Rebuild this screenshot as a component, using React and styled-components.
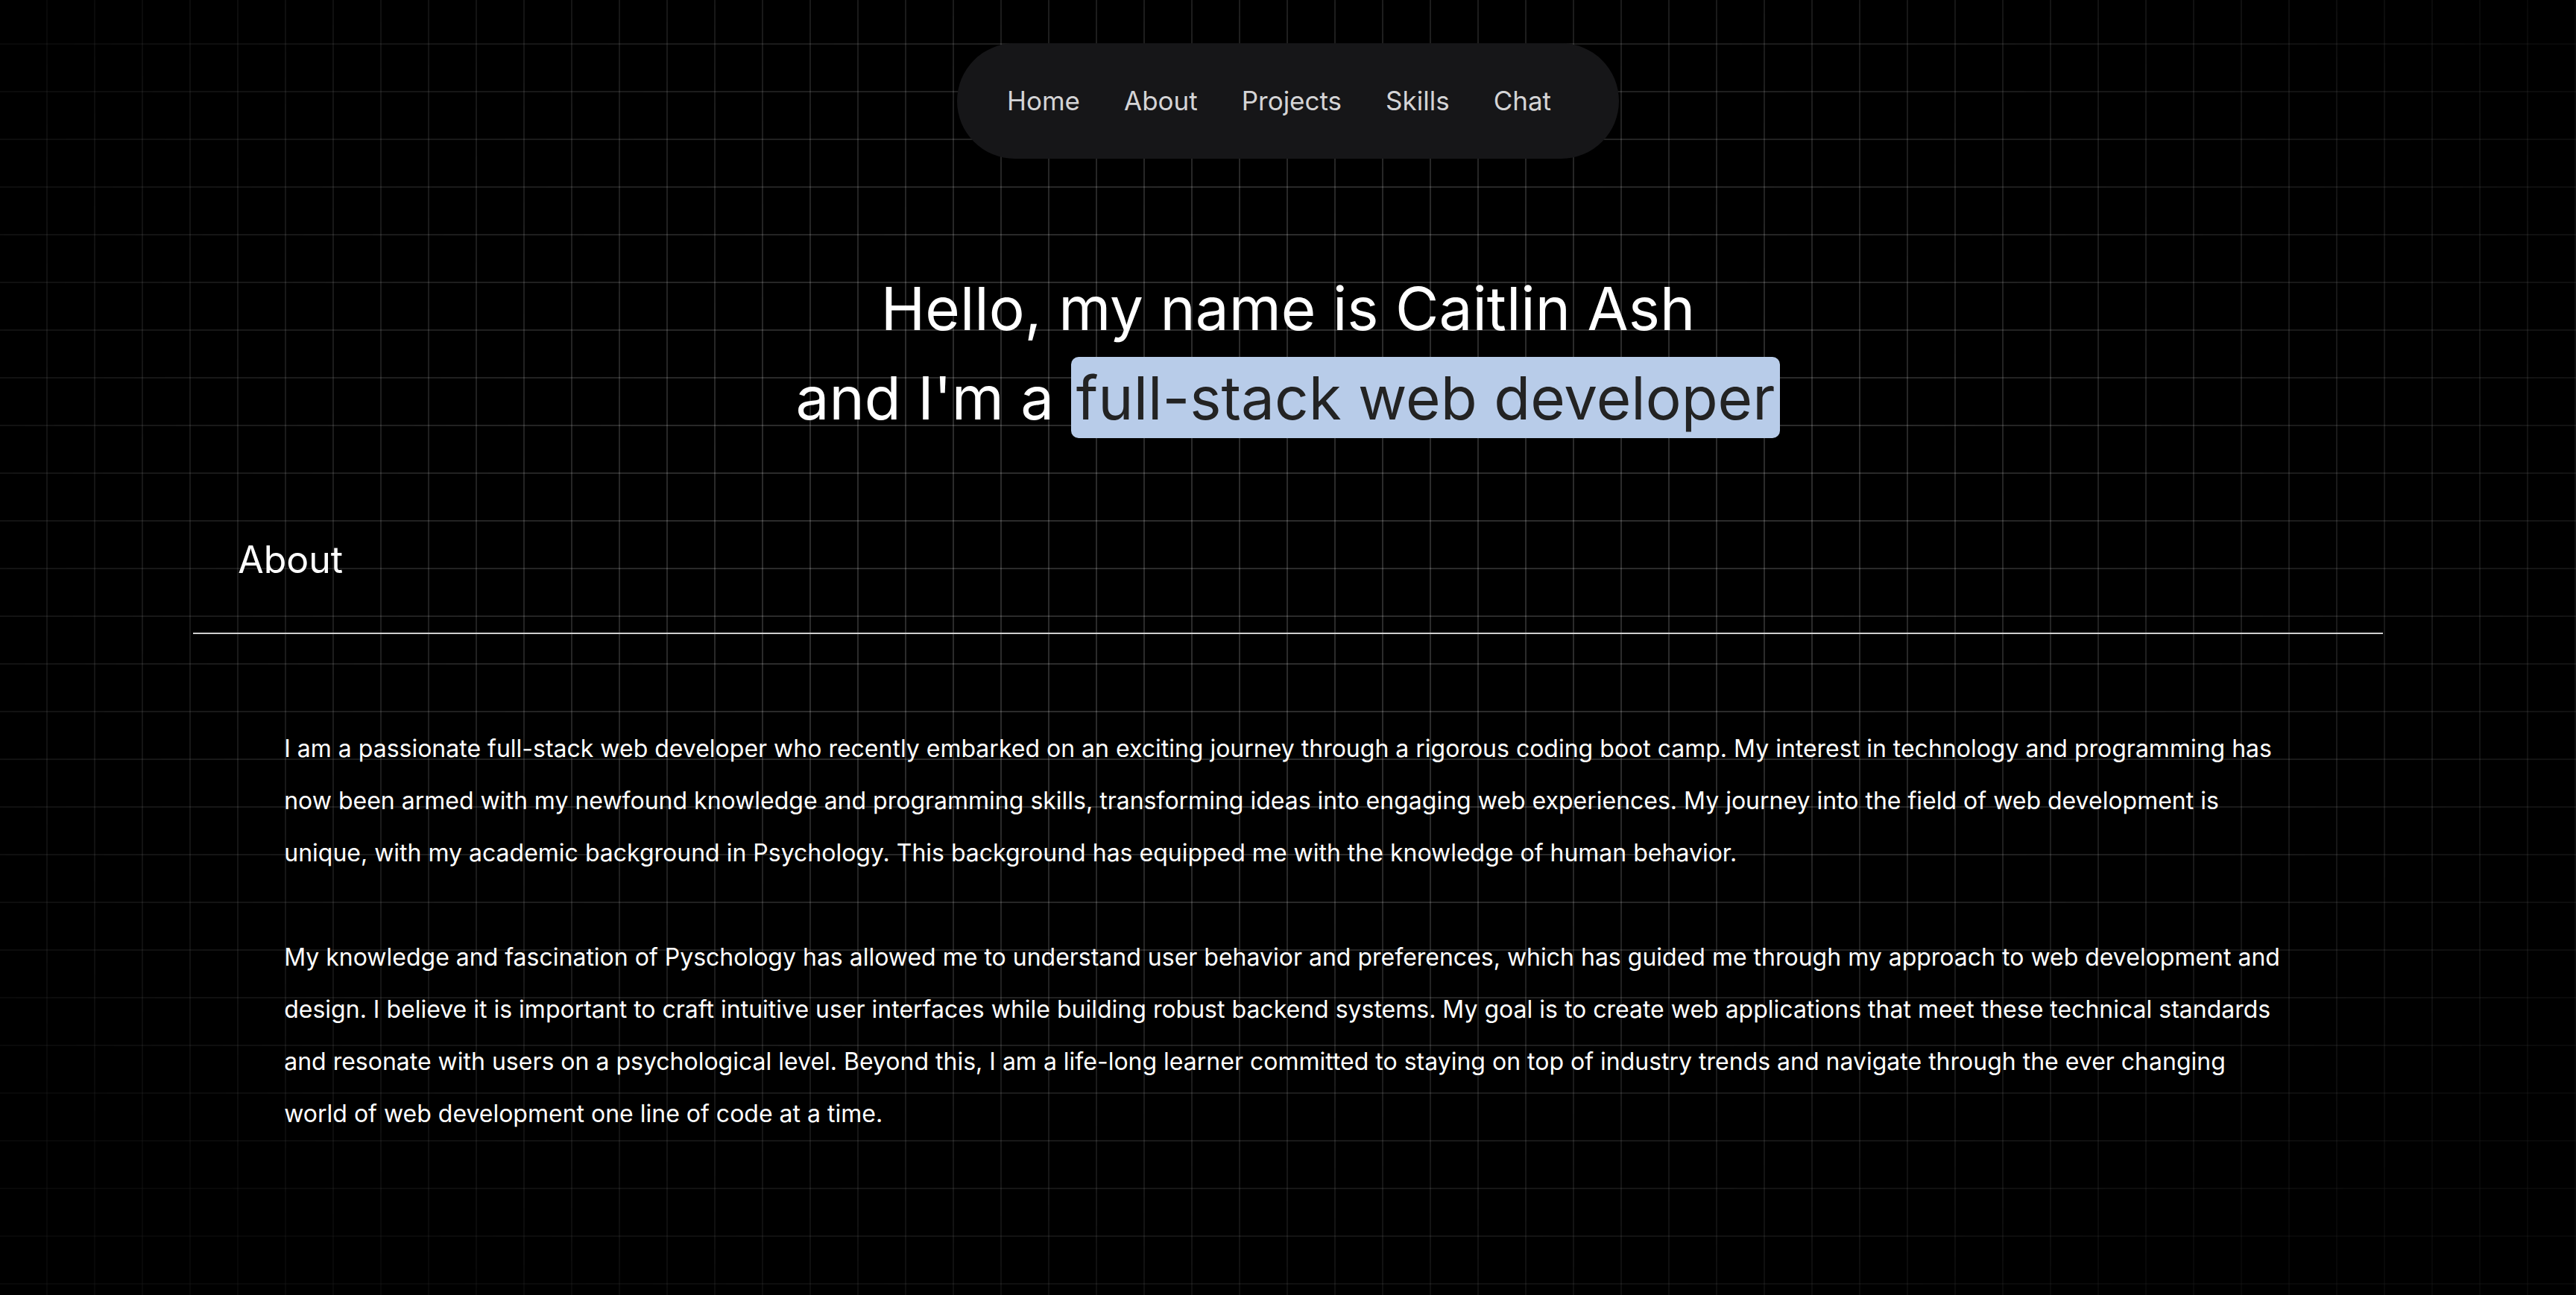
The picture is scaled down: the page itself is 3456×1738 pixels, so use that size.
import React from 'react';
import styled, { createGlobalStyle } from 'styled-components';

const GlobalStyle = createGlobalStyle`
  html, body {
    margin: 0;
    padding: 0;
    background: #000000;
  }
  body {
    font-family: Inter, "Noto Sans", sans-serif;
    color: #ffffff;
  }
  * {
    box-sizing: border-box;
  }
`

const Page = styled.div`
  position: relative;
  min-height: 100vh;
  overflow: hidden;

  &::before {
    content: '';
    position: absolute;
    inset: 0;
    pointer-events: none;
    background-image:
      linear-gradient(to right, rgba(255, 255, 255, 0.17) 2px, transparent 2px),
      linear-gradient(to bottom, rgba(255, 255, 255, 0.17) 2px, transparent 2px);
    background-size: 64px 64px;
    background-position: 62px 58px;
    -webkit-mask-image: radial-gradient(ellipse 62% 68% at 50% 42%, #000 35%, rgba(0, 0, 0, 0.18) 100%);
    mask-image: radial-gradient(ellipse 62% 68% at 50% 42%, #000 35%, rgba(0, 0, 0, 0.18) 100%);
  }
`

const Content = styled.div`
  position: relative;
  z-index: 1;
`

const NavBar = styled.nav`
  display: flex;
  justify-content: center;
  padding-top: 58px;
`

const Pill = styled.ul`
  display: flex;
  align-items: center;
  gap: 59px;
  height: 155px;
  margin: 0;
  padding: 0 91px 0 67px;
  list-style: none;
  background: #161618;
  border-radius: 78px;
`

const NavLink = styled.li`
  font-size: 35px;
  line-height: 1;
  color: #d4d4d6;
  cursor: pointer;
`

const Hero = styled.h1`
  margin: 141px 0 0;
  font-size: 80px;
  font-weight: 400;
  line-height: 120px;
  text-align: center;
  color: #ffffff;
`

const Highlight = styled.span`
  padding: 6px 7px;
  border-radius: 10px;
  background: #b8cce9;
  color: #232323;
`

const Section = styled.section`
  width: 85%;
  margin: 0 auto;
  padding-top: 127px;
`

const SectionTitle = styled.h2`
  margin: 0;
  padding-left: 60px;
  font-size: 50px;
  font-weight: 400;
  line-height: 60px;
  color: #ffffff;
`

const Rule = styled.hr`
  margin: 68px 0 0;
  border: none;
  height: 2px;
  background: #cfcfcf;
`

const Body = styled.div`
  padding: 119px 122px 0;
`

const Para = styled.p`
  margin: 0 0 70px;
  font-size: 32px;
  line-height: 70px;
  color: #ffffff;
`

const links = ['Home', 'About', 'Projects', 'Skills', 'Chat'];

const App = () => {
  return (
    <Page>
      <GlobalStyle />
      <Content>
        <NavBar>
          <Pill>
            {links.map(l => (
              <NavLink key={l}>{l}</NavLink>
            ))}
          </Pill>
        </NavBar>

        <Hero>
          Hello, my name is Caitlin Ash
          <br />
          and I'm a <Highlight>full-stack web developer</Highlight>
        </Hero>

        <Section>
          <SectionTitle>About</SectionTitle>
          <Rule />
          <Body>
            <Para>
              I am a passionate full-stack web developer who recently embarked on an exciting journey through a rigorous coding boot camp. My interest in technology and programming has now been armed with my newfound knowledge and programming skills, transforming ideas into engaging web experiences. My journey into the field of web development is unique, with my academic background in Psychology. This background has equipped me with the knowledge of human behavior.
            </Para>
            <Para>
              My knowledge and fascination of Pyschology has allowed me to understand user behavior and preferences, which has guided me through my approach to web development and design. I believe it is important to craft intuitive user interfaces while building robust backend systems. My goal is to create web applications that meet these technical standards and resonate with users on a psychological level. Beyond this, I am a life-long learner committed to staying on top of industry trends and navigate through the ever changing world of web development one line of code at a time.
            </Para>
          </Body>
        </Section>
      </Content>
    </Page>
  );
}

export default App;
